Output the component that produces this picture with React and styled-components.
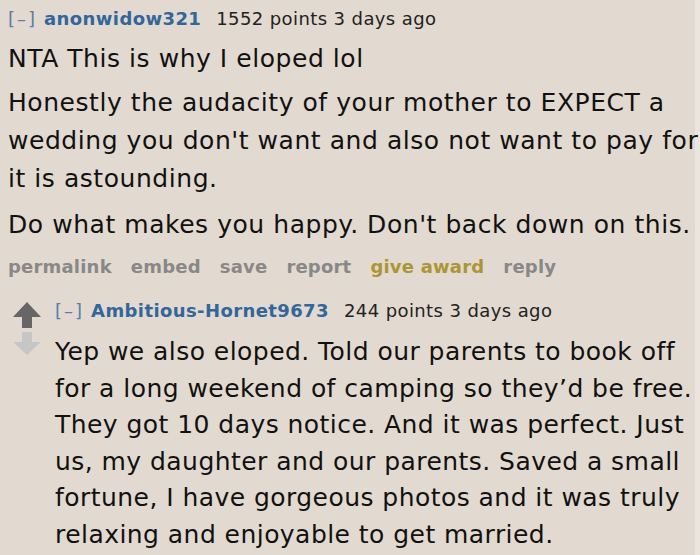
import React from "react";
import styled, { createGlobalStyle } from "styled-components";

const Global = createGlobalStyle`
  html, body { margin: 0; padding: 0; }
  body {
    background: #e2dad0;
    font-family: "DejaVu Sans", Verdana, sans-serif;
    color: #111;
    width: 700px;
    height: 555px;
    overflow: hidden;
  }
`;

const Page = styled.div`
  width: 700px;
  height: 555px;
  background: linear-gradient(to right, #e2dad0 695px, #ebe5dd 695px);
  overflow: hidden;
`;

const Comment = styled.div`
  padding: 8px 0 0 8px;
`;

const Tagline = styled.div`
  font-size: 18px;
  line-height: 22px;
  letter-spacing: 0.4px;
  color: #222;
  display: flex;
  align-items: baseline;
  white-space: nowrap;
`;

const Toggle = styled.span`
  color: #5a7ea6;
  letter-spacing: 2px;
  margin-right: 7px;
`;

const Author = styled.span`
  color: #336699;
  font-weight: bold;
  margin-right: 15px;
`;

const Body = styled.div`
  margin-top: ${(p) => p.$top || 10}px;
  font-size: 25px;
  letter-spacing: ${(p) => p.$ls || 0.55}px;
  line-height: ${(p) => p.$lh || 38}px;
  color: #111;
  white-space: nowrap;
`;

const Para = styled.p`
  margin: 0 0 ${(p) => p.$gap || 6}px 0;
`;

const Actions = styled.ul`
  list-style: none;
  margin: 12px 0 0 0;
  padding: 0;
  display: flex;
  gap: 19px;
  font-size: 18px;
  letter-spacing: 0.2px;
  line-height: 22px;
  font-weight: bold;
`;

const Action = styled.li`
  color: ${(p) => (p.$gold ? "#ab9635" : "#888")};
`;

const Child = styled.div`
  display: flex;
  margin-top: 22px;
  padding-left: 5px;
`;

const Votes = styled.div`
  width: 28px;
  display: flex;
  flex-direction: column;
  align-items: center;
  gap: 4px;
  padding-top: 2px;
  margin-right: 15px;
  flex-shrink: 0;
`;

const ChildMain = styled.div`
  flex: 1;
  min-width: 0;
  margin-left: -1px;
`;

const Arrow = ({ down, color }) => (
  <svg width="28" height="26" viewBox="0 0 28 26" style={{ display: "block" }}>
    {down ? (
      <path d="M9 0 H19 V10 H28 L14 23 L0 10 H9 Z" fill={color} />
    ) : (
      <path d="M14 0 L28 15 H19 V26 H9 V15 H0 Z" fill={color} />
    )}
  </svg>
);

export default function App() {
  return (
    <Page>
      <Global />
      <Comment>
        <Tagline>
          <Toggle>[–]</Toggle>
          <Author>anonwidow321</Author>
          <span>1552 points 3 days ago</span>
        </Tagline>
        <Body $top={10} $lh={38}>
          <Para $gap={6}>NTA This is why I eloped lol</Para>
          <Para $gap={8}>
            Honestly the audacity of your mother to EXPECT a<br />
            wedding you don't want and also not want to pay for<br />
            it is astounding.
          </Para>
          <Para $gap={0}>Do what makes you happy. Don't back down on this.</Para>
        </Body>
        <Actions>
          <Action>permalink</Action>
          <Action>embed</Action>
          <Action>save</Action>
          <Action>report</Action>
          <Action $gold>give award</Action>
          <Action>reply</Action>
        </Actions>
        <Child>
          <Votes>
            <Arrow color="#666666" />
            <Arrow down color="#c6c6c6" />
          </Votes>
          <ChildMain>
            <Tagline>
              <Toggle>[–]</Toggle>
              <Author>Ambitious-Hornet9673</Author>
              <span>244 points 3 days ago</span>
            </Tagline>
            <Body $top={12} $lh={36.6} $ls={0.45}>
              <Para $gap={0}>
                Yep we also eloped. Told our parents to book off<br />
                for a long weekend of camping so they’d be free.<br />
                They got 10 days notice. And it was perfect. Just<br />
                us, my daughter and our parents. Saved a small<br />
                fortune, I have gorgeous photos and it was truly<br />
                relaxing and enjoyable to get married.
              </Para>
            </Body>
          </ChildMain>
        </Child>
      </Comment>
    </Page>
  );
}
